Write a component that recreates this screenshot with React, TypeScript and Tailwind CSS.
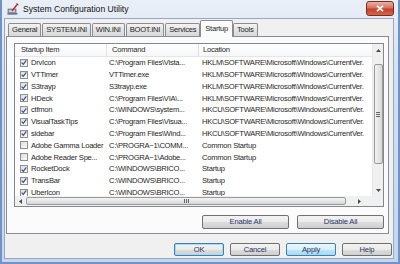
import React from "react";

type Row = { name: string; command: string; location: string; on: boolean };

const HKLM = "HKLM\\SOFTWARE\\Microsoft\\Windows\\CurrentVer.";
const HKCU = "HKCU\\SOFTWARE\\Microsoft\\Windows\\CurrentVer.";

const rows: Row[] = [
  { name: "DrvIcon", command: "C:\\Program Files\\Vista...", location: HKLM, on: true },
  { name: "VTTimer", command: "VTTimer.exe", location: HKLM, on: true },
  { name: "S3trayp", command: "S3trayp.exe", location: HKLM, on: true },
  { name: "HDeck", command: "C:\\Program Files\\VIA\\...", location: HKLM, on: true },
  { name: "ctfmon", command: "C:\\WINDOWS\\system...", location: HKCU, on: true },
  { name: "VisualTaskTips", command: "C:\\Program Files\\Visua...", location: HKCU, on: true },
  { name: "sidebar", command: "C:\\Program Files\\Wind...", location: HKCU, on: true },
  { name: "Adobe Gamma Loader", command: "C:\\PROGRA~1\\COMM...", location: "Common Startup", on: false },
  { name: "Adobe Reader Spe...", command: "C:\\PROGRA~1\\Adobe...", location: "Common Startup", on: false },
  { name: "RocketDock", command: "C:\\WINDOWS\\BRICO...", location: "Startup", on: true },
  { name: "TransBar", command: "C:\\WINDOWS\\BRICO...", location: "Startup", on: true },
  { name: "UberIcon", command: "C:\\WINDOWS\\BRICO...", location: "Startup", on: true },
];

const tabs = ["General", "SYSTEM.INI", "WIN.INI", "BOOT.INI", "Services", "Startup", "Tools"];

function Check({ on }: { on: boolean }) {
  return (
    <div className="w-[8px] h-[8px] shrink-0 border border-[#8e8f8f] bg-[linear-gradient(135deg,#dcdcdc,#fbfbfb)] flex items-center justify-center">
      {on && (
        <svg width="7" height="7" viewBox="0 0 7 7">
          <path d="M0.8 3.6 L2.7 5.6 L6.2 0.9" fill="none" stroke="#3b4f8a" strokeWidth="1.4" />
        </svg>
      )}
    </div>
  );
}

function Button({ label, kind, w }: { label: string; kind?: "default" | "hot"; w: string }) {
  const look =
    kind === "hot"
      ? "border-[#3c7fb1] bg-[linear-gradient(to_bottom,#eaf6fd_0%,#d9f0fc_50%,#bee6fd_51%,#a7d9f5_100%)]"
      : kind === "default"
        ? "border-[#3c7fb1] bg-[linear-gradient(to_bottom,#f2f2f2_0%,#ebebeb_50%,#dddddd_51%,#cfcfcf_100%)] shadow-[inset_0_0_0_1px_#a6dcf6]"
        : "border-[#707070] bg-[linear-gradient(to_bottom,#f2f2f2_0%,#ebebeb_50%,#dddddd_51%,#cfcfcf_100%)]";
  return (
    <div className={`${w} h-full rounded-[2px] border ${look} flex items-center justify-center text-[7.6px] tracking-[-0.2px] text-[#26355f]`}>
      {label}
    </div>
  );
}

function AppIcon() {
  return (
    <svg width="12" height="12" viewBox="0 0 12 12">
      <rect x="1" y="6" width="8" height="5" fill="#8d97a5" stroke="#5a6472" strokeWidth="0.6" />
      <rect x="2" y="7" width="6" height="2" fill="#c9d1dc" />
      <rect x="0.5" y="10" width="10" height="1.5" fill="#6b7480" />
      <path d="M5 8 L10.5 1" stroke="#c8282a" strokeWidth="1.4" />
      <path d="M9.6 0.6 L11.4 1.8" stroke="#7a1a1a" strokeWidth="1" />
    </svg>
  );
}

export default function App() {
  return (
    <div className="w-[400px] h-[264px] flex flex-col border-x-2 border-b-2 border-[#6f93c8] bg-[linear-gradient(to_bottom,#e9eff7,#d3e0ef_30%,#c6d6ea)] font-['Liberation_Sans',Arial,sans-serif] text-[#1f1f1f] overflow-hidden">
      {/* title bar */}
      <div className="h-[18px] flex items-center pl-[5px] pr-[4px] shrink-0">
        <AppIcon />
        <span className="ml-[4px] text-[8.6px] text-[#111]">System Configuration Utility</span>
        <div className="ml-auto self-start mt-[1px] w-[28px] h-[15px] rounded-[3px] border border-[#7a2c20] bg-[linear-gradient(to_bottom,#eab2a6_0%,#d8705c_45%,#c5402a_55%,#d6644a_100%)] flex items-center justify-center">
          <svg width="8" height="7" viewBox="0 0 8 7">
            <path d="M1 0.8 L7 6.2 M7 0.8 L1 6.2" stroke="#fff" strokeWidth="1.8" />
          </svg>
        </div>
      </div>

      {/* client area */}
      <div className="flex-1 ml-[2px] mr-[4px] mb-[3px] border border-[#98a8c0] bg-[#f0f0f0] flex flex-col">
        {/* tab strip */}
        <div className="flex items-end h-[17px] pl-[3px] relative z-10 tracking-[-0.25px]">
          {tabs.map((t) => {
            const sel = t === "Startup";
            return sel ? (
              <div
                key={t}
                className="h-[17px] -mb-[1px] -ml-[1px] px-[4px] border border-b-0 border-[#898c95] rounded-t-[2px] bg-[#fbfbfc] flex items-center text-[7.6px]"
              >
                {t}
              </div>
            ) : (
              <div
                key={t}
                className="h-[13px] mr-[1px] px-[3px] border border-b-0 border-[#898c95] rounded-t-[2px] bg-[linear-gradient(to_bottom,#f3f3f3,#e3e3e3_50%,#d9d9d9)] flex items-center text-[7.6px]"
              >
                {t}
              </div>
            );
          })}
        </div>

        {/* tab panel */}
        <div className="h-[198px] ml-[1px] mr-[4px] border border-[#898c95] bg-[#fbfbfc] flex flex-col pl-[7px] pr-[4px] pt-[6px]">
          {/* list view */}
          <div className="h-[164px] border border-[#828790] bg-white flex flex-col">
            <div className="flex-1 flex min-h-0">
              <div className="flex-1 flex flex-col overflow-hidden tracking-[-0.25px]">
                {/* header */}
                <div className="h-[13px] shrink-0 flex text-[7.6px] text-[#2b2b2b] bg-[linear-gradient(to_bottom,#ffffff,#f6f7f8)] border-b border-[#e5e5e5]">
                  <div className="w-[92px] pl-[6px] flex items-center border-r border-[#e2e3e5]">Startup Item</div>
                  <div className="w-[92px] pl-[5px] flex items-center border-r border-[#e2e3e5]">Command</div>
                  <div className="flex-1 pl-[4px] flex items-center">Location</div>
                </div>
                {rows.map((r) => (
                  <div key={r.name} className="h-[11.8px] shrink-0 flex items-center text-[7.6px] whitespace-nowrap">
                    <div className="w-[92px] pl-[5px] flex items-center gap-[3px] overflow-hidden">
                      <Check on={r.on} />
                      <span>{r.name}</span>
                    </div>
                    <div className="w-[92px] pl-[2px] overflow-hidden">{r.command}</div>
                    <div className="flex-1 pl-[3px] overflow-hidden">{r.location}</div>
                  </div>
                ))}
              </div>
              {/* vertical scrollbar */}
              <div className="w-[11px] bg-[#f0f0f0] border-l border-[#e8e8e8] flex flex-col items-center">
                <div className="h-[13px] flex items-center justify-center">
                  <svg width="5" height="3" viewBox="0 0 5 3"><path d="M0 3 L2.5 0 L5 3 Z" fill="#4d4d4d" /></svg>
                </div>
                <div className="mt-[7px] h-[100px] w-[9px] rounded-[2px] border border-[#9a9a9a] bg-[linear-gradient(to_right,#f3f3f3,#e6e6e6_50%,#d6d6d6)] flex items-center justify-center">
                  <div className="flex flex-col gap-[1px]">
                    <div className="w-[4px] h-px bg-[#666]" />
                    <div className="w-[4px] h-px bg-[#666]" />
                    <div className="w-[4px] h-px bg-[#666]" />
                  </div>
                </div>
                <div className="flex-1 flex items-end justify-center pb-[4px]">
                  <svg width="5" height="3" viewBox="0 0 5 3"><path d="M0 0 L2.5 3 L5 0 Z" fill="#4d4d4d" /></svg>
                </div>
              </div>
            </div>
            {/* horizontal scrollbar */}
            <div className="h-[10px] shrink-0 flex bg-[#f0f0f0]">
              <div className="flex-1 flex items-center">
                <div className="w-[11px] flex items-center justify-center">
                  <svg width="3" height="5" viewBox="0 0 3 5"><path d="M3 0 L0 2.5 L3 5 Z" fill="#4d4d4d" /></svg>
                </div>
                <div className="w-[320px] h-[8px] rounded-[2px] border border-[#9a9a9a] bg-[linear-gradient(to_bottom,#f3f3f3,#e6e6e6_50%,#d6d6d6)] flex items-center justify-center">
                  <div className="flex gap-[1px]">
                    <div className="w-px h-[4px] bg-[#666]" />
                    <div className="w-px h-[4px] bg-[#666]" />
                    <div className="w-px h-[4px] bg-[#666]" />
                  </div>
                </div>
                <div className="flex-1 flex items-center justify-center">
                  <svg width="3" height="5" viewBox="0 0 3 5"><path d="M0 0 L3 2.5 L0 5 Z" fill="#4d4d4d" /></svg>
                </div>
              </div>
              <div className="w-[11px] bg-[#f0f0f0]" />
            </div>
          </div>

          {/* enable/disable */}
          <div className="h-[14px] mt-[8px] flex justify-end gap-[8px]">
            <Button label="Enable All" w="w-[87px]" />
            <Button label="Disable All" w="w-[87px]" />
          </div>
        </div>

        {/* dialog buttons */}
        <div className="h-[13px] mt-[9px] flex justify-end gap-[6px] pr-[1px]">
          <Button label="OK" kind="default" w="w-[50px]" />
          <Button label="Cancel" w="w-[50px]" />
          <Button label="Apply" kind="hot" w="w-[50px]" />
          <Button label="Help" w="w-[50px]" />
        </div>
      </div>
    </div>
  );
}
